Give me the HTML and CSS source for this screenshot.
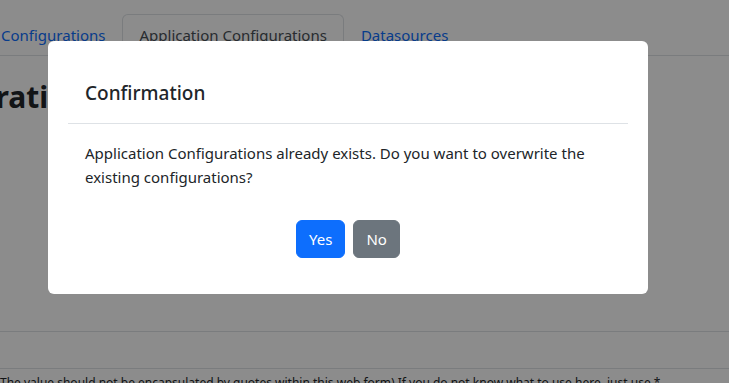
FILE: index.html
```html
<!DOCTYPE html>
<html lang="en">
  <head>
    <meta charset="UTF-8" />
    <meta name="viewport" content="width=device-width, initial-scale=1.0" />
    <title>Application Configurations</title>
    <link rel="stylesheet" href="styles.css">
  </head>
  <body>
    <div class="page">
      <ul class="nav-tabs">
        <li><a href="#">Configurations</a></li>
        <li><a href="#" class="active">Application Configurations</a></li>
        <li><a href="#">Datasources</a></li>
      </ul>

      <h2 class="page-title">Configurations</h2>

      <div class="form-rows">
        <div class="form-row"></div>
        <div class="form-row">
          <p class="hint">The value should not be encapsulated by quotes within this web form) If you do not know what to use here, just use *</p>
        </div>
      </div>
    </div>

    <div class="modal-backdrop">
      <div class="modal-dialog">
        <div class="modal-header">
          <h5>Confirmation</h5>
        </div>
        <div class="modal-body">
          <p>Application Configurations already exists. Do you want to overwrite the existing configurations?</p>
        </div>
        <div class="modal-footer">
          <button class="btn btn-primary">Yes</button>
          <button class="btn btn-secondary">No</button>
        </div>
      </div>
    </div>
  </body>
</html>
```

FILE: styles.css
```css
body {
  margin: 0;
  font-family: "Noto Sans", "Liberation Sans", sans-serif;
  font-size: 15px;
  line-height: 24px;
  color: #212529;
  background-color: #fff;
  overflow: hidden;
}
.page {
  padding-top: 14px;
}
.nav-tabs {
  display: flex;
  margin: 0;
  padding: 0;
  list-style: none;
  border-bottom: 1px solid #dee2e6;
}
.nav-tabs li:first-child {
  margin-left: -16px;
}
.nav-tabs a {
  display: block;
  padding: 8px 16px;
  margin-bottom: -1px;
  color: #0d6efd;
  text-decoration: none;
  border: 1px solid transparent;
  border-radius: 6px 6px 0 0;
}
.nav-tabs a.active {
  color: #495057;
  background-color: #fff;
  border-color: #dee2e6 #dee2e6 #fff;
}
.page-title {
  margin: 22px 0 0 -121px;
  font-size: 30px;
  line-height: 38px;
  font-weight: 700;
}
.form-rows {
  margin-top: 215px;
}
.form-row {
  border-top: 1px solid #dee2e6;
  min-height: 36px;
}
.hint {
  margin: 4px 0 0;
  font-size: 12px;
  line-height: 20px;
  white-space: nowrap;
}
.modal-backdrop {
  position: fixed;
  inset: 0;
  background-color: rgba(0, 0, 0, 0.45);
}
.modal-dialog {
  width: 600px;
  margin: 41px 0 0 48px;
  background-color: #fff;
  border-radius: 6px;
}
.modal-header {
  margin: 0 20px;
  padding: 40px 17px 18px;
  border-bottom: 1px solid #dee2e6;
}
.modal-header h5 {
  margin: 0;
  font-size: 19px;
  line-height: 24px;
  font-weight: 500;
}
.modal-body {
  padding: 17px 37px 0;
}
.modal-body p {
  margin: 0;
}
.modal-footer {
  display: flex;
  justify-content: center;
  gap: 8px;
  padding: 31px 0 36px;
}
.btn {
  padding: 6px 12px;
  font-family: inherit;
  font-size: 15px;
  line-height: 24px;
  color: #fff;
  border: 1px solid transparent;
  border-radius: 6px;
  cursor: pointer;
}
.btn-primary {
  background-color: #0d6efd;
  border-color: #0d6efd;
}
.btn-secondary {
  background-color: #6c757d;
  border-color: #6c757d;
}
```
